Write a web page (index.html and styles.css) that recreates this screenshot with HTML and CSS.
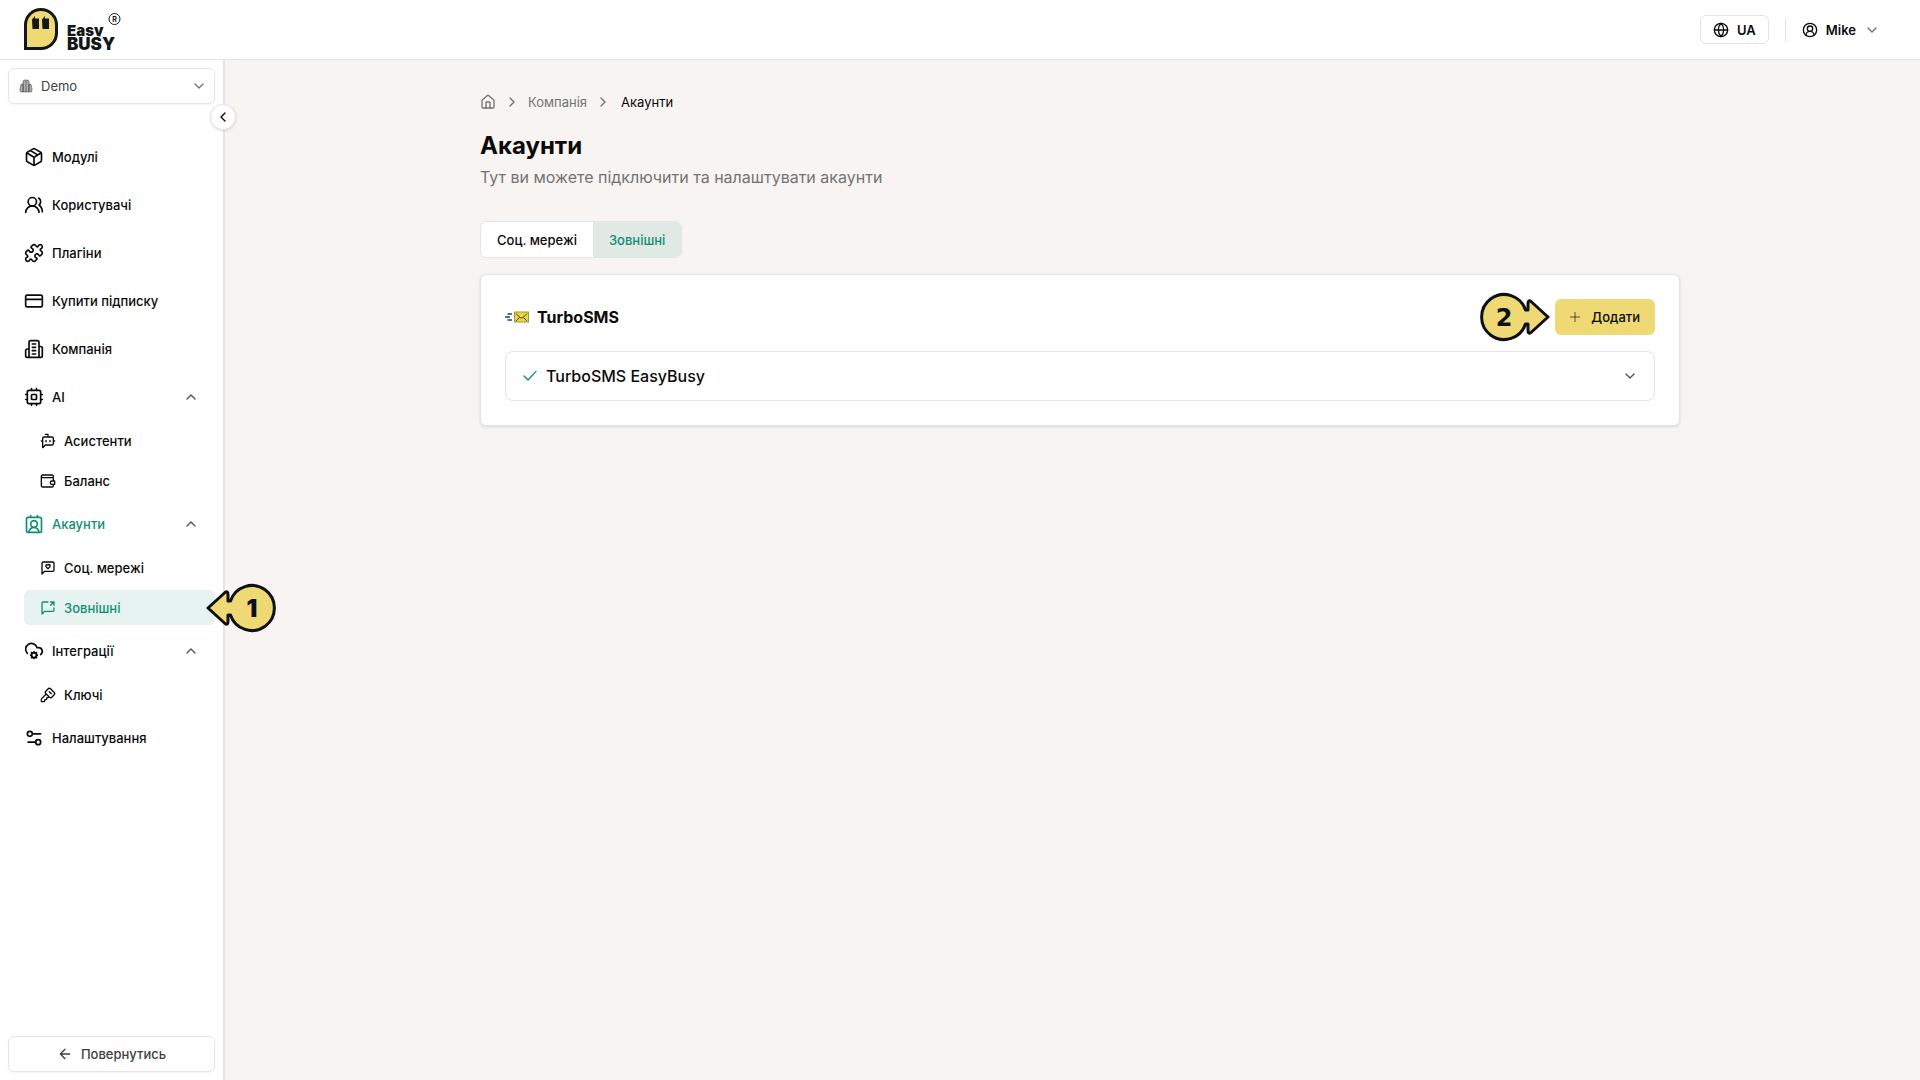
FILE: index.html
```html
<!DOCTYPE html>
<html lang="uk">
<head>
<meta charset="utf-8">
<meta name="viewport" content="width=device-width, initial-scale=1">
<title>Акаунти</title>
<link rel="stylesheet" href="styles.css">
</head>
<body>
<header class="topbar">
  <a class="logo" href="#" aria-label="Easy Busy">
    <svg width="100" height="44" viewBox="0 0 100 44">
      <path d="M1.500 40.500V17a15.500 15.500 0 0 1 31 0v8a15.500 15.500 0 0 1-15.500 15.500z" fill="#efd975" stroke="#14171a" stroke-width="3"/>
      <path d="M8 11.500l3-3.500v2.500h4V21H8.500zM18 11.500l3-3.500v2.500h4V21h-6.500z" fill="#14171a"/>
      <text class="logo-easy" x="43" y="28">Easy</text>
      <text class="logo-busy" x="43" y="42">BUSY</text>
      <circle cx="90.500" cy="11" r="5.500" fill="#fff" stroke="#14171a"/>
      <text class="logo-mark" x="90.500" y="13.500">R</text>
    </svg>
  </a>
  <div class="topbar-actions">
    <button class="lang" type="button">
      <svg class="icon-sm" viewBox="0 0 24 24"><circle cx="12" cy="12" r="10"/><path d="M12 2a14.500 14.500 0 0 0 0 20 14.500 14.500 0 0 0 0-20M2 12h20"/></svg>
      UA
    </button>
    <button class="user" type="button">
      <svg class="icon-sm" viewBox="0 0 24 24"><path d="M18 20a6 6 0 0 0-12 0"/><circle cx="12" cy="10" r="4"/><circle cx="12" cy="12" r="10"/></svg>
      <span>Mike</span>
      <svg class="icon-sm muted" viewBox="0 0 24 24"><path d="m6 9 6 6 6-6"/></svg>
    </button>
  </div>
</header>

<div class="shell">
  <aside class="sidebar">
    <label class="workspace">
      <svg class="workspace-icon" viewBox="0 0 24 24"><path d="M7 22V5a3 3 0 0 1 3-3h4a3 3 0 0 1 3 3v17zM7 9H5a2 2 0 0 0-2 2v3a2 2 0 0 0-1 2v4a2 2 0 0 0 2 2h3zM17 9h2a2 2 0 0 1 2 2v3a2 2 0 0 1 1 2v4a2 2 0 0 1-2 2h-3z"/><path d="M12 3v19"/></svg>
      <select aria-label="Компанія"><option>Demo</option></select>
      <svg class="icon-sm muted" viewBox="0 0 24 24"><path d="m6 9 6 6 6-6"/></svg>
    </label>
    <button class="collapse" type="button" aria-label="Згорнути меню">
      <svg class="icon-sm" viewBox="0 0 24 24"><path d="m15 18-6-6 6-6"/></svg>
    </button>

    <nav class="menu">
      <a class="item" href="#">
        <svg class="icon" viewBox="0 0 24 24"><path d="M11 21.730a2 2 0 0 0 2 0l7-4A2 2 0 0 0 21 16V8a2 2 0 0 0-1-1.730l-7-4a2 2 0 0 0-2 0l-7 4A2 2 0 0 0 3 8v8a2 2 0 0 0 1 1.730zM12 22V12M3.300 7l7.703 4.734a2 2 0 0 0 1.994 0L20.700 7M7.500 4.270l9 5.150"/></svg>
        Модулі
      </a>
      <a class="item" href="#">
        <svg class="icon" viewBox="0 0 24 24"><path d="M18 21a8 8 0 0 0-16 0"/><circle cx="10" cy="8" r="5"/><path d="M22 20c0-3.370-2-6.500-4-8a5 5 0 0 0-.45-8.300"/></svg>
        Користувачі
      </a>
      <a class="item" href="#">
        <svg class="icon" viewBox="0 0 24 24"><path d="M19.439 7.850c-.049.322.059.648.289.878l1.568 1.568c.47.47.706 1.087.706 1.704s-.235 1.233-.706 1.704l-1.611 1.611a.98.98 0 0 1-.837.276c-.47-.07-.802-.48-.968-.925a2.501 2.501 0 1 0-3.214 3.214c.446.166.855.497.925.968a.979.979 0 0 1-.276.837l-1.610 1.610a2.404 2.404 0 0 1-1.705.707 2.402 2.402 0 0 1-1.704-.706l-1.568-1.568a1.026 1.026 0 0 0-.877-.29c-.493.074-.84.504-1.020.968a2.500 2.500 0 1 1-3.237-3.237c.464-.18.894-.527.967-1.020a1.026 1.026 0 0 0-.289-.877l-1.568-1.568A2.402 2.402 0 0 1 1.998 12c0-.617.236-1.234.706-1.704L4.230 8.770c.24-.24.581-.353.917-.303.515.077.877.528 1.073 1.010a2.500 2.500 0 1 0 3.259-3.259c-.482-.196-.933-.558-1.010-1.073-.05-.336.062-.676.303-.917l1.525-1.525A2.402 2.402 0 0 1 12 1.998c.617 0 1.234.236 1.704.706l1.568 1.568c.23.23.556.338.877.29.493-.074.84-.504 1.020-.968a2.500 2.500 0 1 1 3.237 3.237c-.464.18-.894.527-.967 1.020Z"/></svg>
        Плагіни
      </a>
      <a class="item" href="#">
        <svg class="icon" viewBox="0 0 24 24"><rect x="2" y="5" width="20" height="14" rx="2"/><path d="M2 10h20"/></svg>
        Купити підписку
      </a>
      <a class="item" href="#">
        <svg class="icon" viewBox="0 0 24 24"><path d="M6 22V4a2 2 0 0 1 2-2h8a2 2 0 0 1 2 2v18ZM6 12H4a2 2 0 0 0-2 2v6a2 2 0 0 0 2 2h2M18 9h2a2 2 0 0 1 2 2v9a2 2 0 0 1-2 2h-2M10 6h4M10 10h4M10 14h4M10 18h4"/></svg>
        Компанія
      </a>

      <button class="item" type="button" aria-expanded="true">
        <svg class="icon" viewBox="0 0 24 24"><rect x="4" y="4" width="16" height="16" rx="2"/><rect x="9" y="9" width="6" height="6" rx="1"/><path d="M15 2v2M15 20v2M2 15h2M2 9h2M20 15h2M20 9h2M9 2v2M9 20v2"/></svg>
        AI
        <svg class="icon-sm chevron" viewBox="0 0 24 24"><path d="m18 15-6-6-6 6"/></svg>
      </button>
      <div class="submenu">
        <a class="subitem" href="#">
          <svg class="icon-sm" viewBox="0 0 24 24"><path d="M12 6V2H8M8 18l-4 4V8a2 2 0 0 1 2-2h12a2 2 0 0 1 2 2v8a2 2 0 0 1-2 2ZM2 12h2M9 11v2M15 11v2M20 12h2"/></svg>
          Асистенти
        </a>
        <a class="subitem" href="#">
          <svg class="icon-sm" viewBox="0 0 24 24"><path d="M20 12V9a2 2 0 0 0-2-2H4a2 2 0 0 1 0-4h14a2 2 0 0 1 2 2v3M2 5v14a2 2 0 0 0 2 2h14a2 2 0 0 0 2-2v-2M22 12h-4a2.500 2.500 0 0 0 0 5h4z"/></svg>
          Баланс
        </a>
      </div>

      <button class="item active" type="button" aria-expanded="true">
        <svg class="icon" viewBox="0 0 24 24"><path d="M16 2v2M17.915 22a6 6 0 0 0-12 0M8 2v2"/><circle cx="12" cy="12" r="4"/><rect x="3" y="4" width="18" height="18" rx="2"/></svg>
        Акаунти
        <svg class="icon-sm chevron" viewBox="0 0 24 24"><path d="m18 15-6-6-6 6"/></svg>
      </button>
      <div class="submenu">
        <a class="subitem" href="#">
          <svg class="icon-sm" viewBox="0 0 24 24"><path d="M21 15a2 2 0 0 1-2 2H7l-4 4V5a2 2 0 0 1 2-2h14a2 2 0 0 1 2 2zM14.800 7.500a1.840 1.840 0 0 0-2.600 0l-.2.3-.3-.3a1.840 1.840 0 1 0-2.400 2.800L12 13l2.700-2.700c.9-.9.8-2.100.1-2.800"/></svg>
          Соц. мережі
        </a>
        <a class="subitem current" href="#" aria-current="page">
          <svg class="icon-sm" viewBox="0 0 24 24"><path d="M21 12v3a2 2 0 0 1-2 2H7l-4 4V5a2 2 0 0 1 2-2h7M16 3h5v5M16 8l5-5"/></svg>
          Зовнішні
          <svg class="pointer pointer-left" width="72" height="52" viewBox="0 0 72 52"><path d="M3 26 20 10.500Q23 8.500 23 12.500V19h2.500A22.500 22.500 0 1 1 25.500 33H23v6.500Q23 43.500 20 41.500Z"/><text x="47" y="35">1</text></svg>
        </a>
      </div>

      <button class="item" type="button" aria-expanded="true">
        <svg class="icon" viewBox="0 0 24 24"><path d="M20 16.200A4.500 4.500 0 0 0 17.500 8h-1.800A7 7 0 1 0 4 14.900"/><circle cx="12" cy="17" r="3"/><path d="M12 13v1M12 20v1M16 17h-1M9 17H8M15 14l-.88.88M9.880 19.120 9 20M15 20l-.88-.88M9.880 14.880 9 14"/></svg>
        Інтеграції
        <svg class="icon-sm chevron" viewBox="0 0 24 24"><path d="m18 15-6-6-6 6"/></svg>
      </button>
      <div class="submenu">
        <a class="subitem" href="#">
          <svg class="icon-sm" viewBox="0 0 24 24"><path d="M12.400 2.700a2.500 2.500 0 0 1 3.400 0l5.500 5.500a2.500 2.500 0 0 1 0 3.400l-3.700 3.700a2.500 2.500 0 0 1-3.400 0L8.700 9.800a2.500 2.500 0 0 1 0-3.400zM14 7l3 3M9.400 10.600l-6.814 6.814A2 2 0 0 0 2 18.828V21a1 1 0 0 0 1 1h3a1 1 0 0 0 1-1v-1a1 1 0 0 1 1-1h1a1 1 0 0 0 1-1v-1a1 1 0 0 1 1-1h.172a2 2 0 0 0 1.414-.586l.814-.814"/></svg>
          Ключі
        </a>
      </div>

      <a class="item" href="#">
        <svg class="icon" viewBox="0 0 24 24"><path d="M20 7h-9M14 17H5"/><circle cx="17" cy="17" r="3"/><circle cx="7" cy="7" r="3"/></svg>
        Налаштування
      </a>
    </nav>

    <button class="back" type="button">
      <svg class="icon-sm" viewBox="0 0 24 24"><path d="m12 19-7-7 7-7M19 12H5"/></svg>
      Повернутись
    </button>
  </aside>

  <main class="main">
    <div class="content">
      <nav class="breadcrumb" aria-label="Навігація">
        <a href="#" aria-label="Головна"><svg class="icon-sm" viewBox="0 0 24 24"><path d="M15 21v-8a1 1 0 0 0-1-1h-4a1 1 0 0 0-1 1v8"/><path d="M3 10a2 2 0 0 1 .709-1.528l7-5.999a2 2 0 0 1 2.582 0l7 5.999A2 2 0 0 1 21 10v9a2 2 0 0 1-2 2H5a2 2 0 0 1-2-2z"/></svg></a>
        <svg class="icon-sm" viewBox="0 0 24 24"><path d="m9 18 6-6-6-6"/></svg>
        <a href="#">Компанія</a>
        <svg class="icon-sm" viewBox="0 0 24 24"><path d="m9 18 6-6-6-6"/></svg>
        <span class="here">Акаунти</span>
      </nav>
      <h1 class="title">Акаунти</h1>
      <p class="subtitle">Тут ви можете підключити та налаштувати акаунти</p>

      <div class="tabs" role="tablist">
        <button type="button" role="tab" aria-selected="false">Соц. мережі</button>
        <button type="button" role="tab" aria-selected="true">Зовнішні</button>
      </div>

      <section class="card">
        <div class="card-head">
          <svg width="24" height="24" viewBox="0 0 24 24"><path d="M2.500 9H7M0 12h5M2.500 15H7" stroke="#17456b" stroke-width="1.400"/><rect x="9.500" y="7" width="14" height="10" fill="#f5d72f" stroke="#8a9a5a"/><path d="m11 8.500 4.500 4.500h2L22 8.500M11 16l3.500-3.500M22 16l-3.500-3.500" fill="none" stroke="#17456b"/></svg>
          <h2>TurboSMS</h2>
          <button class="add" type="button">
            <svg class="icon-sm" viewBox="0 0 24 24"><path d="M5 12h14M12 5v14"/></svg>
            Додати
            <svg class="pointer pointer-right" width="72" height="52" viewBox="0 0 72 52"><path d="M69 26 52 10.500Q49 8.500 49 12.500V19h-2.500A22.500 22.500 0 1 0 46.500 33H49v6.500Q49 43.500 52 41.500Z"/><text x="25" y="35">2</text></svg>
          </button>
        </div>
        <button class="account" type="button" aria-expanded="false">
          <svg class="icon-sm check" viewBox="0 0 24 24"><path d="M21 5 9 18l-6-6"/></svg>
          TurboSMS EasyBusy
          <svg class="icon-sm chevron" viewBox="0 0 24 24"><path d="m6 9 6 6 6-6"/></svg>
        </button>
      </section>
    </div>
  </main>
</div>
</body>
</html>
```
FILE: styles.css
```css
:root {
  --ink: #0a0a0a;
  --gray: #737373;
  --line: #e4e4e7;
  --green: #0f8f72;
  --yellow: #efd975;
}

* {
  box-sizing: border-box;
}

body {
  margin: 0;
  min-height: 100vh;
  display: flex;
  flex-direction: column;
  background: #f8f4f1;
  color: var(--ink);
  font: 500 13px/20px Inter, "Noto Sans", sans-serif;
}

a {
  color: inherit;
  text-decoration: none;
}

button,
select {
  font: inherit;
  color: inherit;
  background: none;
  border: 0;
  padding: 0;
  cursor: pointer;
}

h1,
h2,
p {
  margin: 0;
}

svg {
  flex: none;
  display: block;
}

.icon,
.icon-sm {
  width: 20px;
  height: 20px;
  fill: none;
  stroke: currentColor;
  stroke-width: 2;
  stroke-linecap: round;
  stroke-linejoin: round;
}

.icon-sm {
  width: 16px;
  height: 16px;
}

.muted {
  color: var(--gray);
}

/* Top bar */
.topbar {
  height: 60px;
  display: flex;
  align-items: center;
  justify-content: space-between;
  padding: 0 40px 0 24px;
  background: #fff;
  border-bottom: 1px solid var(--line);
}

.logo-easy,
.logo-busy {
  font-size: 15px;
  font-weight: 900;
  fill: #14171a;
}

/* The white outline cuts the tail of the "y" above */
.logo-busy {
  font-size: 17px;
  stroke: #fff;
  stroke-width: 2px;
  paint-order: stroke;
}

.logo-mark {
  font-size: 7px;
  font-weight: 700;
  text-anchor: middle;
  fill: #14171a;
}

.topbar-actions {
  display: flex;
  align-items: center;
  font-weight: 600;
}

.lang {
  height: 29px;
  display: flex;
  align-items: center;
  gap: 8px;
  padding: 0 12px;
  border: 1px solid var(--line);
  border-radius: 6px;
}

.user {
  height: 24px;
  display: flex;
  align-items: center;
  gap: 8px;
  margin-left: 16px;
  padding-left: 16px;
  border-left: 1px solid var(--line);
}

/* Sidebar */
.shell {
  flex: 1;
  display: grid;
  grid-template-columns: 240px 1fr;
}

.sidebar {
  position: relative;
  width: 225px;
  display: flex;
  flex-direction: column;
  padding: 8px;
  background: #fff;
  border-right: 2px solid var(--line);
}

.workspace,
.back {
  height: 36px;
  display: flex;
  align-items: center;
  gap: 8px;
  border: 1px solid var(--line);
  border-radius: 6px;
  box-shadow: 0 1px 2px rgba(0, 0, 0, 0.05);
  color: #404040;
}

.workspace {
  padding: 0 7px 0 10px;
  font-weight: 400;
}

.workspace select {
  flex: 1;
  appearance: none;
}

.workspace-icon {
  width: 14px;
  height: 14px;
  fill: #b4b4b4;
  stroke: #5a5a5a;
  stroke-width: 1.5;
}

.collapse {
  position: absolute;
  top: 44px;
  right: -13px;
  width: 26px;
  height: 26px;
  display: grid;
  place-items: center;
  background: #fff;
  border: 1px solid var(--line);
  border-radius: 50%;
  box-shadow: 0 1px 3px rgba(0, 0, 0, 0.12);
}

.menu {
  flex: 1;
  display: flex;
  flex-direction: column;
  padding: 29px 0 0 16px;
}

.item {
  height: 48px;
  display: flex;
  align-items: center;
  gap: 8px;
  padding-right: 16px;
}

.active,
.current {
  color: var(--green);
}

.chevron {
  margin-left: auto;
  color: #525252;
}

.submenu {
  display: flex;
  flex-direction: column;
  gap: 5px;
  padding: 2px 0;
}

.subitem {
  position: relative;
  height: 35px;
  display: flex;
  align-items: center;
  gap: 8px;
  padding-left: 16px;
  border-radius: 6px;
}

.current {
  background: #e7f3f0;
}

.back {
  justify-content: center;
}

/* Numbered pointers */
.pointer {
  position: absolute;
  z-index: 1;
  fill: var(--yellow);
  stroke: #0d1117;
  stroke-width: 3;
  stroke-linejoin: round;
}

.pointer text {
  font-size: 24px;
  font-weight: 900;
  text-anchor: middle;
  fill: #0d1117;
  stroke: none;
}

.pointer-right text {
  font-family: "DejaVu Sans", sans-serif;
}

.pointer-left {
  top: -8px;
  right: -62px;
}

.pointer-right {
  top: -8px;
  right: 104px;
}

/* Content */
.main {
  padding: 32px 24px;
}

.content {
  max-width: 1200px;
  margin: 0 auto;
}

.breadcrumb {
  display: flex;
  align-items: center;
  gap: 8px;
  font-weight: 400;
  color: var(--gray);
}

.here {
  padding-left: 2px;
  color: var(--ink);
}

.title {
  margin-top: 18px;
  font-size: 24px;
  line-height: 32px;
  font-weight: 700;
}

.subtitle {
  margin-top: 3px;
  font-size: 16px;
  line-height: 24px;
  font-weight: 400;
  color: var(--gray);
}

.tabs {
  width: fit-content;
  height: 37px;
  display: flex;
  margin-top: 32px;
  overflow: hidden;
  background: #fff;
  border: 1px solid var(--line);
  border-radius: 6px;
}

.tabs button {
  padding: 0 16px;
}

.tabs [aria-selected="true"] {
  background: #e0e9e3;
  color: var(--green);
}

.card {
  margin-top: 16px;
  padding: 24px;
  background: #fff;
  border: 1px solid var(--line);
  border-radius: 6px;
  box-shadow: 0 1px 3px rgba(0, 0, 0, 0.12);
}

.card-head {
  display: flex;
  align-items: center;
  gap: 8px;
}

.card-head h2 {
  font-size: 16px;
  line-height: 24px;
  font-weight: 700;
}

.add {
  position: relative;
  height: 36px;
  display: flex;
  align-items: center;
  gap: 8px;
  margin-left: auto;
  padding: 0 15px 0 12px;
  border-radius: 6px;
  background: var(--yellow);
}

.add .icon-sm {
  stroke-width: 1;
}

.account {
  width: 100%;
  height: 50px;
  display: flex;
  align-items: center;
  gap: 8px;
  margin-top: 16px;
  padding: 0 16px;
  border: 1px solid var(--line);
  border-radius: 8px;
  font-size: 16px;
}

.check {
  color: var(--green);
}
```
